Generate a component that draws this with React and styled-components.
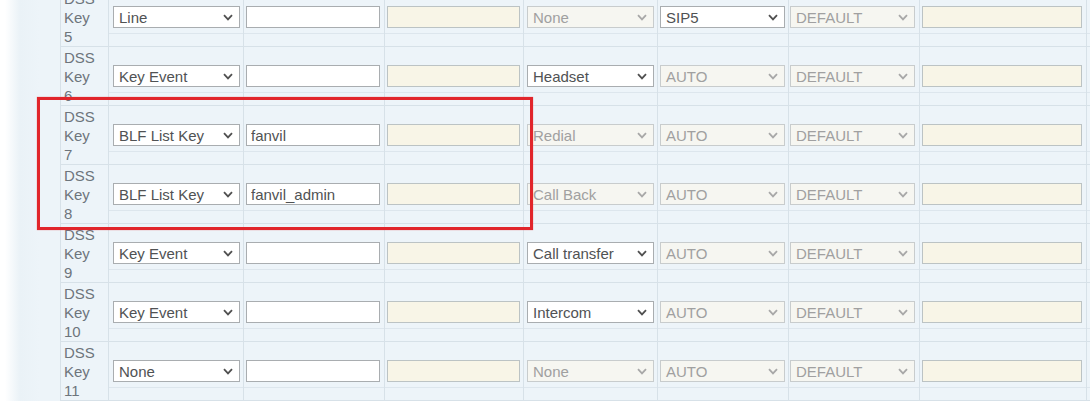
import React from 'react'
import styled, { createGlobalStyle } from 'styled-components'

const GlobalStyle = createGlobalStyle`
  html, body {
    margin: 0;
    padding: 0;
    background: #fff;
  }
  body {
    font-family: "Liberation Sans", Arial, sans-serif;
  }
`

// column layout: cell width, left padding, control width
const COLUMNS = [
  { w: 135, pad: 4, ctrl: 127 },
  { w: 141, pad: 2, ctrl: 134 },
  { w: 139, pad: 2, ctrl: 133 },
  { w: 134, pad: 3, ctrl: 127 },
  { w: 131, pad: 2, ctrl: 125 },
  { w: 131, pad: 1, ctrl: 125 },
  { w: 167, pad: 2, ctrl: 160 },
]

const ROWS = [
  { n: 5, type: 'Line', value: '', key: 'None', keyOn: false, line: 'SIP5', lineOn: true },
  { n: 6, type: 'Key Event', value: '', key: 'Headset', keyOn: true, line: 'AUTO' },
  { n: 7, type: 'BLF List Key', value: 'fanvil', key: 'Redial', keyOn: false, line: 'AUTO' },
  { n: 8, type: 'BLF List Key', value: 'fanvil_admin', key: 'Call Back', keyOn: false, line: 'AUTO' },
  { n: 9, type: 'Key Event', value: '', key: 'Call transfer', keyOn: true, line: 'AUTO' },
  { n: 10, type: 'Key Event', value: '', key: 'Intercom', keyOn: true, line: 'AUTO' },
  { n: 11, type: 'None', value: '', key: 'None', keyOn: false, line: 'AUTO' },
]

const Page = styled.div`
  position: relative;
  width: 1090px;
  height: 401px;
  overflow: hidden;
  background: linear-gradient(to right, #fff 0, #fff 5px, #eaf2f7 20px, #edf4f9 40px);
`

const Table = styled.div`
  display: flex;
  flex-direction: column;
  margin-top: -12px;
`

const Row = styled.div`
  box-sizing: border-box;
  height: 59px;
  display: grid;
  grid-template-columns: 60px 48px ${COLUMNS.map((c) => `${c.w}px`).join(' ')} 1fr;
`

const Gutter = styled.div``

const Label = styled.div`
  display: flex;
  align-items: center;
  padding-left: 3px;
  border-left: 1px solid #d7e1e8;
  border-bottom: 1px solid #d7e1e8;
  font-size: 15px;
  line-height: 19px;
  color: #6d757c;
`

const Cell = styled.div`
  display: flex;
  align-items: center;
  padding-left: ${(p) => p.$pad}px;
  border-left: 1px solid #d7e1e8;
  border-bottom: 1px solid #d7e1e8;
  background: linear-gradient(
    to bottom,
    transparent 0,
    transparent 45px,
    #dde6ed 45px,
    #dde6ed 46px,
    transparent 46px
  );
`

const Select = styled.div`
  box-sizing: border-box;
  width: ${(p) => p.$w}px;
  height: 22px;
  display: flex;
  align-items: center;
  justify-content: space-between;
  padding: 0 6px 0 5px;
  border: 1px solid ${(p) => (p.$disabled ? '#c8cccd' : '#a9adb0')};
  background: ${(p) => (p.$disabled ? '#f6f6f1' : '#fff')};
  color: ${(p) => (p.$disabled ? '#a0a0a0' : '#505254')};
  font-size: 15px;
  white-space: nowrap;
`

const Chevron = styled.svg`
  flex: none;
  width: 10px;
  height: 7px;
  stroke: ${(p) => (p.$disabled ? '#a8a8a8' : '#505050')};
`

const TextBox = styled.input`
  box-sizing: border-box;
  width: ${(p) => p.$w}px;
  height: 22px;
  margin: 0;
  padding: 0 4px;
  border: 1px solid ${(p) => (p.$disabled ? '#bcc3c4' : '#a9adb0')};
  border-radius: 0;
  background: ${(p) => (p.$disabled ? '#f8f5e7' : '#fff')};
  color: #505254;
  font-family: "Liberation Sans", Arial, sans-serif;
  font-size: 15px;
  outline: none;
`

const Highlight = styled.div`
  position: absolute;
  left: 37px;
  top: 97px;
  width: 496px;
  height: 133px;
  box-sizing: border-box;
  border: 3px solid #e1252b;
  box-shadow: 0 0 1px rgba(225, 37, 43, 0.6);
  pointer-events: none;
`

const Dropdown = ({ text, width, disabled }) => (
  <Select $w={width} $disabled={disabled}>
    <span>{text}</span>
    <Chevron $disabled={disabled} viewBox='0 0 10 7' fill='none' strokeWidth='1.8'>
      <path d='M1 1.2 L5 5.4 L9 1.2' />
    </Chevron>
  </Select>
)

const KeyRow = ({ row }) => (
  <Row>
    <Gutter />
    <Label>
      DSS
      <br />
      Key
      <br />
      {row.n}
    </Label>
    <Cell $pad={COLUMNS[0].pad}>
      <Dropdown text={row.type} width={COLUMNS[0].ctrl} />
    </Cell>
    <Cell $pad={COLUMNS[1].pad}>
      <TextBox $w={COLUMNS[1].ctrl} value={row.value} readOnly />
    </Cell>
    <Cell $pad={COLUMNS[2].pad}>
      <TextBox $w={COLUMNS[2].ctrl} $disabled value='' readOnly />
    </Cell>
    <Cell $pad={COLUMNS[3].pad}>
      <Dropdown text={row.key} width={COLUMNS[3].ctrl} disabled={!row.keyOn} />
    </Cell>
    <Cell $pad={COLUMNS[4].pad}>
      <Dropdown text={row.line} width={COLUMNS[4].ctrl} disabled={!row.lineOn} />
    </Cell>
    <Cell $pad={COLUMNS[5].pad}>
      <Dropdown text='DEFAULT' width={COLUMNS[5].ctrl} disabled />
    </Cell>
    <Cell $pad={COLUMNS[6].pad}>
      <TextBox $w={COLUMNS[6].ctrl} $disabled value='' readOnly />
    </Cell>
    <Cell $pad={0} />
  </Row>
)

const App = () => (
  <>
    <GlobalStyle />
    <Page>
      <Table>
        {ROWS.map((row) => (
          <KeyRow key={row.n} row={row} />
        ))}
      </Table>
      <Highlight />
    </Page>
  </>
)

export default App
